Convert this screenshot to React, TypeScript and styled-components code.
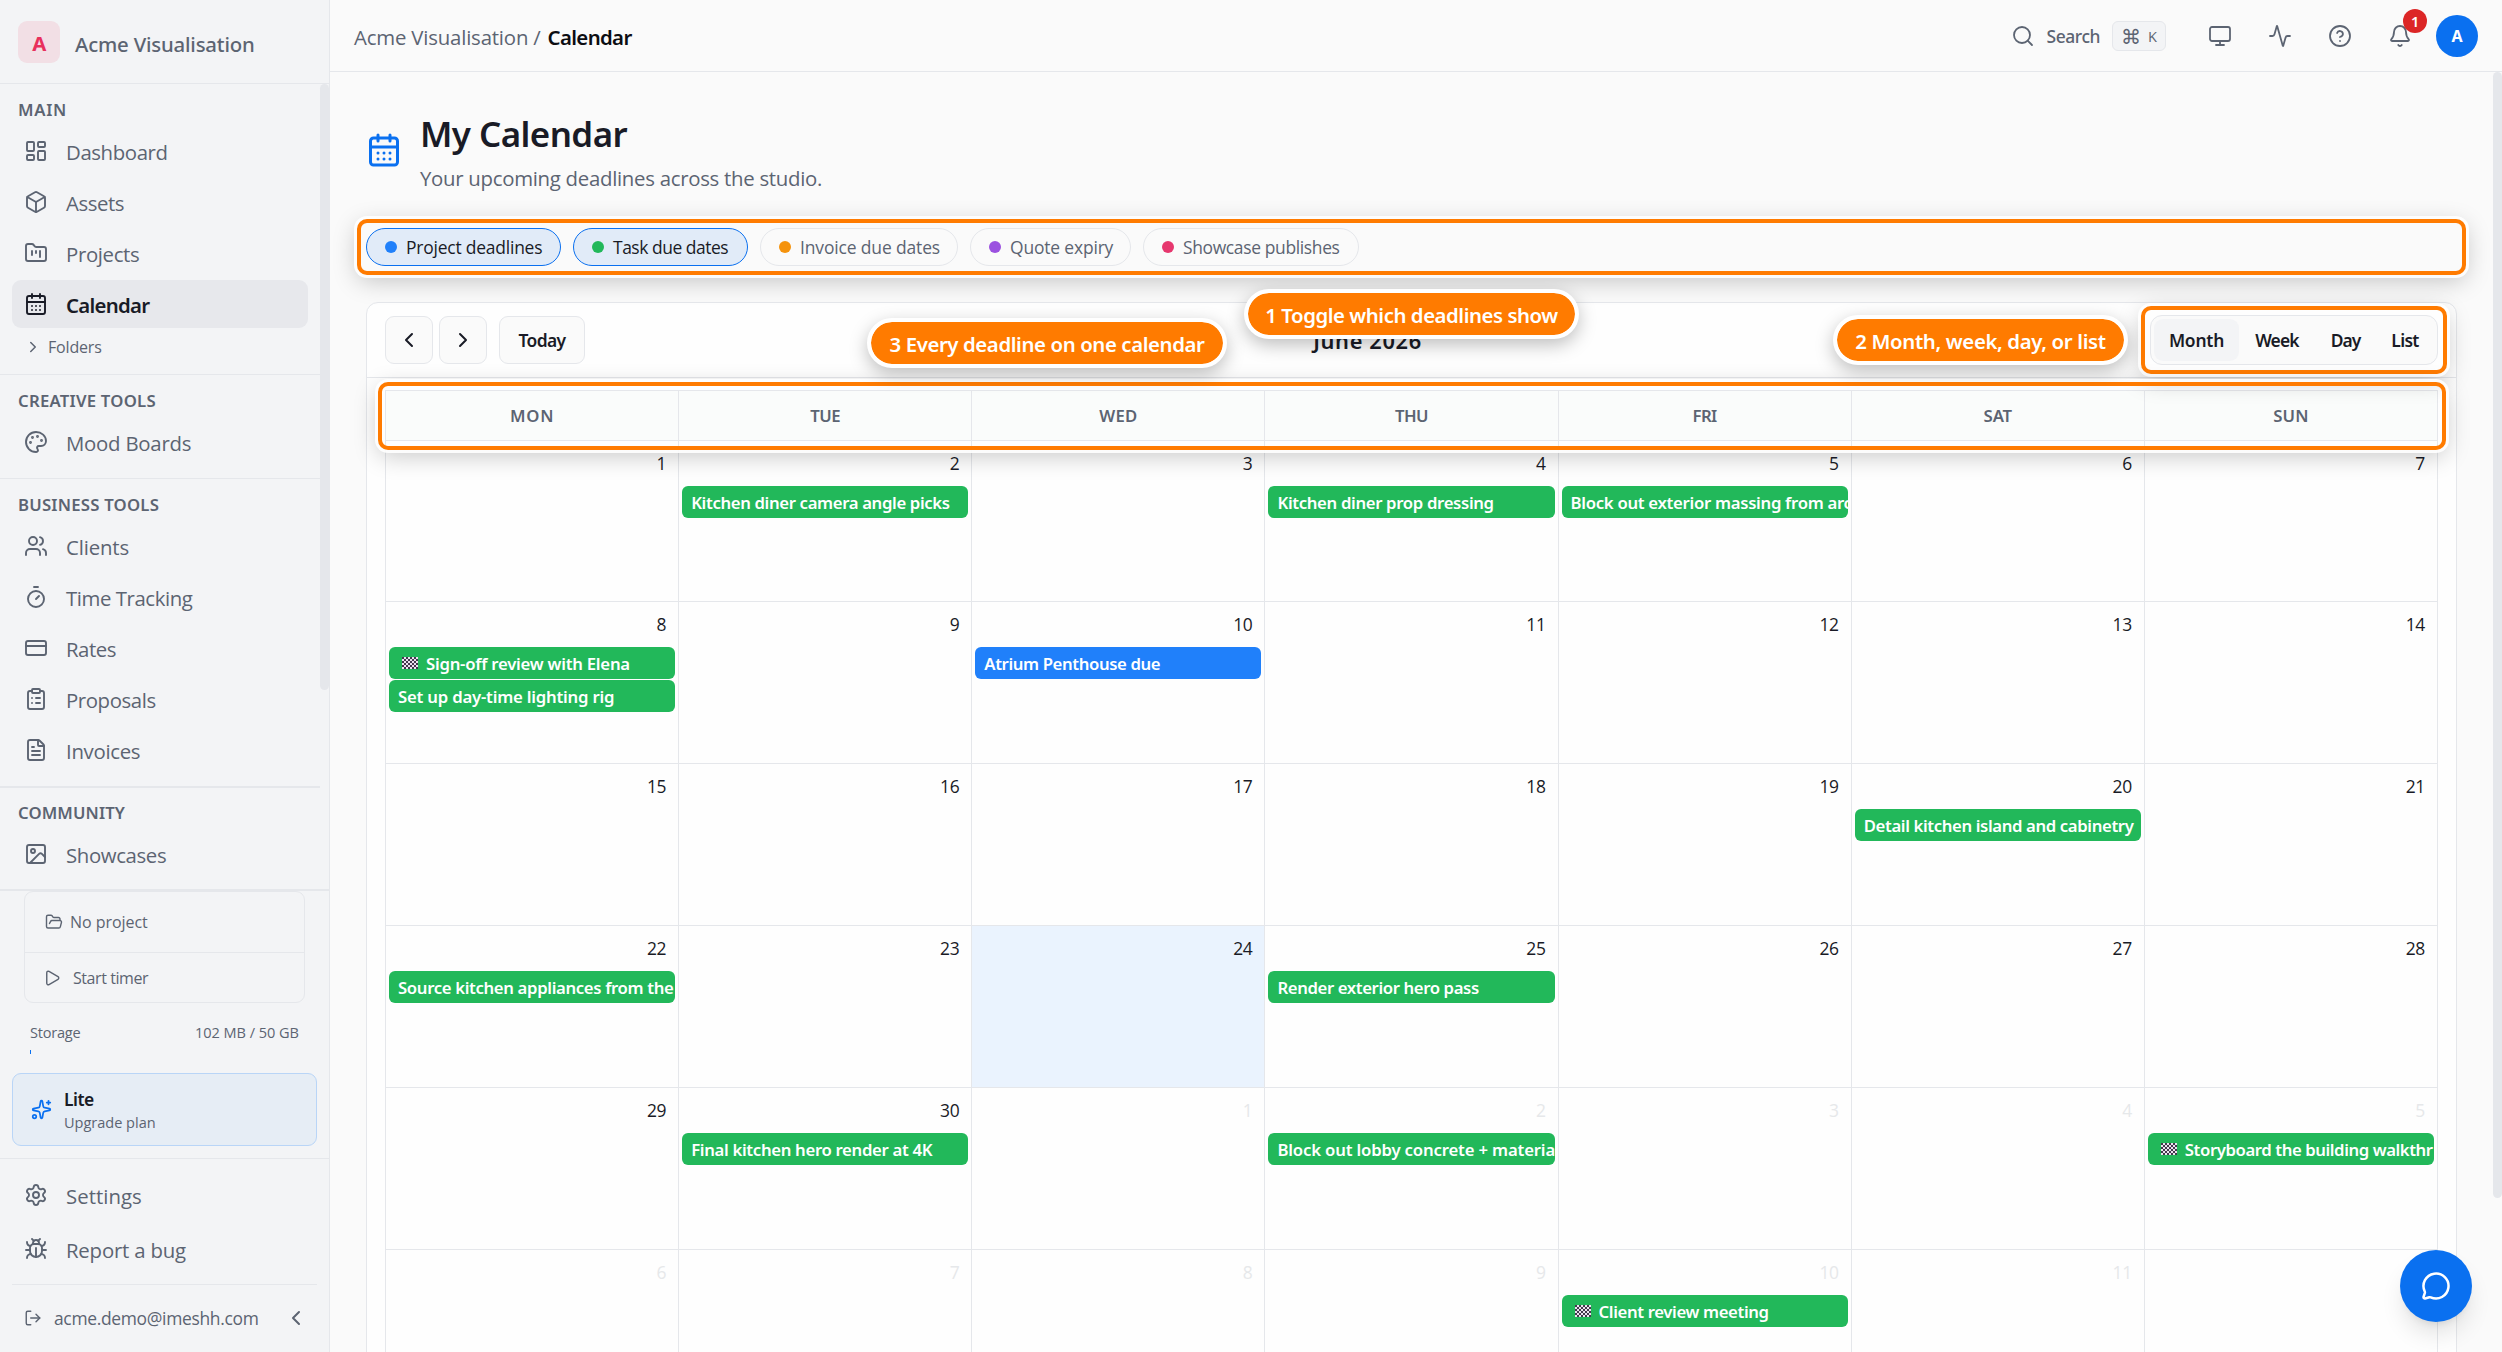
import React, { useLayoutEffect, useRef, useState } from "react";
import styled, { createGlobalStyle, css } from "styled-components";
import {
  Activity,
  Bell,
  Bug,
  CalendarDays,
  ChevronLeft,
  ChevronRight,
  CircleQuestionMark,
  ClipboardList,
  CreditCard,
  FileText,
  FolderKanban,
  FolderOpen,
  Image,
  LayoutDashboard,
  LogOut,
  LucideIcon,
  MessageCircle,
  Monitor,
  Box,
  Palette,
  Play,
  Search,
  Settings,
  Sparkles,
  Timer,
  Users,
} from "lucide-react";

const color = {
  page: "#fafafa",
  side: "#f3f4f6",
  line: "#e5e7eb",
  ink: "#191b26",
  muted: "#5c6472",
  faint: "#e6e8ea",
  blue: "#0a70f0",
  green: "#22b85a",
  event: "#2080fa",
  orange: "#ff7b00",
};

const GlobalStyle = createGlobalStyle`
  *, *::before, *::after { box-sizing: border-box; }
  body {
    margin: 0;
    overflow: hidden;
    background: ${color.page};
    color: ${color.ink};
    font-family: "Open Sans", "Noto Sans", sans-serif;
  }
`;

/* ---------- text ---------- */

const Label = styled.span<{ $size: number; $weight?: number; $color?: string }>`
  flex: none;
  display: block;
  padding-top: 0.1em;
  line-height: 1.2;
  white-space: pre;
  font-family: ${(p) => (p.$weight && p.$weight > 400 ? '"Noto Sans", "Open Sans"' : '"Open Sans", "Noto Sans"')}, sans-serif;
  font-size: ${(p) => p.$size * 0.97}px;
  font-weight: ${(p) => p.$weight ?? 400};
  letter-spacing: -0.02em;
  color: ${(p) => p.$color ?? "inherit"};
`;

type TextProps = { size: number; weight?: number; tint?: string; fit?: number; children: string };

/** Single line of text whose tracking is adjusted so that it spans `fit` pixels. */
function Text({ size, weight, tint, fit, children }: TextProps) {
  const ref = useRef<HTMLSpanElement>(null);
  const [tracking, setTracking] = useState<number | null>(null);
  useLayoutEffect(() => {
    const ctx = document.createElement("canvas").getContext("2d");
    if (!fit || !ref.current || !ctx || children.length < 2) return;
    const style = getComputedStyle(ref.current);
    ctx.font = `${style.fontWeight} ${style.fontSize} ${style.fontFamily}`;
    const m = ctx.measureText(children);
    const natural = m.actualBoundingBoxRight + m.actualBoundingBoxLeft;
    setTracking((fit - natural) / (children.length - 1));
  }, [fit, children]);
  return (
    <Label ref={ref} $size={size} $weight={weight} $color={tint} style={tracking === null ? undefined : { letterSpacing: tracking }}>
      {children}
    </Label>
  );
}

/* ---------- shell ---------- */

const Shell = styled.div`
  position: relative;
  display: grid;
  grid-template-columns: 330px 1fr;
  width: 2502px;
  height: 1352px;
  overflow: hidden;
`;

const Sidebar = styled.aside`
  display: flex;
  flex-direction: column;
  height: 1352px;
  border-right: 1px solid ${color.line};
  background: ${color.side};
  color: ${color.muted};
`;

const Brand = styled.div`
  flex: none;
  display: flex;
  align-items: center;
  gap: 15px;
  height: 84px;
  padding: 1px 0 0 18px;
  border-bottom: 1px solid ${color.line};
`;

const BrandName = styled.div`
  padding-top: 2px;
`;

const BrandTile = styled.div`
  display: grid;
  place-items: center;
  width: 42px;
  height: 42px;
  border-radius: 9px;
  background: #f2dfe5;
`;

const NavArea = styled.div`
  flex: none;
  display: grid;
  grid-template-columns: 320px 9px;
  height: 805px;
`;

const ScrollThumb = styled.div<{ $height: number }>`
  height: ${(p) => p.$height}px;
  border-radius: 5px;
  background: ${color.line};
`;

const Group = styled.section<{ $rule: number }>`
  padding: 0 12px 12px;
  border-bottom: ${(p) => p.$rule}px solid ${color.line};
`;

const GroupTitle = styled.div<{ $tight?: boolean }>`
  display: flex;
  align-items: center;
  height: ${(p) => (p.$tight ? 42 : 43)}px;
  padding: 7px 6px 0;
`;

const NavList = styled.div<{ $gap?: number }>`
  display: flex;
  flex-direction: column;
  gap: ${(p) => p.$gap ?? 3}px;
`;

const NavItem = styled.a<{ $active?: boolean }>`
  display: flex;
  align-items: center;
  gap: 18px;
  height: 48px;
  padding-left: 12px;
  border-radius: 9px;
  ${(p) =>
    p.$active &&
    css`
      background: #e7e8ec;
      color: ${color.ink};
    `}
`;

const Folders = styled.div`
  display: flex;
  align-items: center;
  gap: 6px;
  height: 31px;
  margin-top: 3px;
  padding-left: 12px;
`;

const Foot = styled.div`
  flex: 1;
  display: flex;
  flex-direction: column;
  border-top: 2px solid ${color.line};
`;

const TimerCard = styled.div`
  flex: none;
  width: 281px;
  height: 112px;
  margin-left: 24px;
  border: 1px solid ${color.line};
  border-radius: 9px;
`;

const ProjectRow = styled.div`
  display: flex;
  align-items: center;
  gap: 7px;
  height: 61px;
  padding-left: 20px;
  border-bottom: 1px solid ${color.line};
`;

const TimerRow = styled.div`
  display: flex;
  align-items: center;
  gap: 12px;
  height: 49px;
  padding-left: 18px;
`;

const StorageRow = styled.div`
  display: flex;
  justify-content: space-between;
  align-items: center;
  height: 24px;
  margin-top: 17px;
  padding: 0 30px;
`;

const StorageBar = styled.div`
  width: 1px;
  height: 4px;
  margin: 6px 0 19px 30px;
  background: ${color.blue};
`;

const PlanCard = styled.div`
  flex: none;
  display: flex;
  align-items: center;
  gap: 12px;
  height: 73px;
  margin: 0 12px;
  padding-left: 18px;
  border: 1px solid #b9d5f7;
  border-radius: 9px;
  background: #e6edf5;
`;

const PlanText = styled.div`
  display: flex;
  flex-direction: column;
  gap: 2px;
`;

const FootNav = styled.div`
  margin-top: 12px;
  padding: 12px 12px 11px;
  border-top: 1px solid ${color.line};
`;

const Account = styled.div`
  display: flex;
  align-items: center;
  gap: 12px;
  height: 67px;
  margin: 0 12px;
  padding: 0 9px 0 12px;
  border-top: 1px solid ${color.line};
`;

const Push = styled.div`
  margin-left: auto;
  display: flex;
`;

/* ---------- top bar ---------- */

const Main = styled.main`
  display: flex;
  flex-direction: column;
  height: 1352px;
  min-width: 0;
`;

const TopBar = styled.header`
  flex: none;
  display: flex;
  align-items: center;
  justify-content: space-between;
  height: 72px;
  padding: 0 24px;
  border-bottom: 1px solid ${color.line};
  color: ${color.muted};
`;

const Crumbs = styled.div`
  display: flex;
  gap: 7px;
  padding-top: 2px;
`;

const Tools = styled.div`
  display: flex;
  align-items: center;
`;

const SearchBox = styled.div`
  display: flex;
  align-items: center;
  gap: 12px;
  margin-right: 42px;
`;

const Keys = styled.kbd`
  display: flex;
  align-items: center;
  justify-content: center;
  gap: 7px;
  width: 54px;
  height: 30px;
  border: 1px solid ${color.line};
  border-radius: 6px;
  background: ${color.side};
`;

const ToolIcons = styled.div`
  display: flex;
  gap: 36px;
  margin-right: 24px;
`;

const BellWrap = styled.div`
  position: relative;
  display: flex;
`;

const Badge = styled.div`
  position: absolute;
  left: 15px;
  top: -15px;
  display: grid;
  place-items: center;
  width: 24px;
  height: 24px;
  border-radius: 50%;
  background: #dc2626;
`;

const Avatar = styled.div`
  display: grid;
  place-items: center;
  width: 42px;
  height: 42px;
  border-radius: 50%;
  background: ${color.blue};
`;

/* ---------- content ---------- */

const Scroller = styled.div`
  flex: 1;
  min-height: 0;
  display: grid;
  grid-template-columns: 1fr 9px;
`;

const Content = styled.div`
  display: flex;
  flex-direction: column;
  gap: 36px;
  padding: 36px 36px 0;
  min-width: 0;
`;

const PageHead = styled.div`
  display: flex;
  align-items: center;
  gap: 18px;
  height: 84px;
  color: ${color.blue};
`;

const HeadText = styled.div`
  display: flex;
  flex-direction: column;
  justify-content: space-between;
  height: 84px;
`;

const HeadLine = styled.div<{ $height: number }>`
  display: flex;
  align-items: center;
  height: ${(p) => p.$height}px;
`;

const Chips = styled.div`
  display: flex;
  gap: 12px;
`;

const Chip = styled.button<{ $on?: boolean; $width: number }>`
  display: flex;
  align-items: center;
  gap: 9px;
  width: ${(p) => p.$width}px;
  height: 38px;
  padding: 0 0 0 18px;
  border: 1px solid ${(p) => (p.$on ? color.blue : color.line)};
  border-radius: 19px;
  background: ${(p) => (p.$on ? "#e1ebf8" : "transparent")};
  color: ${(p) => (p.$on ? color.ink : color.muted)};
`;

const Dot = styled.i<{ $color: string }>`
  width: 12px;
  height: 12px;
  border-radius: 50%;
  background: ${(p) => p.$color};
`;

const Card = styled.section`
  height: 1100px;
  border: 1px solid ${color.line};
  border-radius: 12px;
  background: #fefefe;
`;

const Toolbar = styled.div`
  display: flex;
  align-items: center;
  justify-content: space-between;
  height: 75px;
  padding: 0 18px;
  border-bottom: 1px solid ${color.line};
`;

const ButtonRow = styled.div`
  display: flex;
  gap: 6px;
`;

const ToolButton = styled.button<{ $wide?: boolean }>`
  display: grid;
  place-items: center;
  width: ${(p) => (p.$wide ? 86 : 48)}px;
  height: 48px;
  margin-left: ${(p) => (p.$wide ? 6 : 0)}px;
  padding: 0;
  border: 1px solid ${color.line};
  border-radius: 9px;
  background: ${color.page};
  color: ${color.ink};
`;

const Switch = styled.div`
  display: grid;
  grid-template-columns: 85px 76px 61px 58px;
  width: 288px;
  height: 50px;
  padding: 3px;
  border: 1px solid ${color.line};
  border-radius: 12px;
  background: ${color.page};
`;

const SwitchItem = styled.button<{ $active?: boolean }>`
  display: grid;
  place-items: center;
  height: 42px;
  padding: 0;
  border: 0;
  border-radius: 9px;
  background: ${(p) => (p.$active ? color.side : "transparent")};
  color: ${color.ink};
`;

const Month = styled.div`
  display: grid;
  grid-template-columns: repeat(7, 1fr);
  grid-template-rows: 50px 161px repeat(5, 162px);
  margin: 12px 18px 0;
  border-left: 1px solid ${color.line};
  border-top: 1px solid ${color.line};
`;

const WeekdayCell = styled.div`
  display: grid;
  place-items: center;
  border-right: 1px solid ${color.line};
  border-bottom: 1px solid ${color.line};
  background: #fafcfb;
`;

const DayCell = styled.div<{ $today?: boolean }>`
  min-width: 0;
  padding: 0 3px;
  border-right: 1px solid ${color.line};
  border-bottom: 1px solid ${color.line};
  background: ${(p) => (p.$today ? "#eaf3fe" : "transparent")};
`;

const DayNumber = styled.div`
  display: flex;
  justify-content: flex-end;
  align-items: center;
  height: 45px;
  padding: 0 9px 1px 0;
`;

const Event = styled.div<{ $color: string }>`
  display: flex;
  align-items: center;
  height: 31.5px;
  margin-bottom: 1.5px;
  padding-left: 9px;
  overflow: hidden;
  border-radius: 6px;
  background: ${(p) => p.$color};
  color: #fff;
`;

const Flag = styled.svg`
  flex: none;
  width: 16px;
  height: 12px;
  margin: 0 8px 0 4px;
`;

/* ---------- overlays ---------- */

const Frame = styled.div<{ $x: number; $y: number; $w: number; $h: number }>`
  position: absolute;
  left: ${(p) => p.$x}px;
  top: ${(p) => p.$y}px;
  width: ${(p) => p.$w}px;
  height: ${(p) => p.$h}px;
  border: 4px solid ${color.orange};
  border-radius: 10px;
  box-shadow: 0 0 0 3px rgba(255, 255, 255, 0.9), 0 6px 24px rgba(0, 0, 0, 0.22);
`;

const Callout = styled.div<{ $x: number; $y: number; $w: number }>`
  position: absolute;
  left: ${(p) => p.$x}px;
  top: ${(p) => p.$y}px;
  display: grid;
  place-items: center;
  width: ${(p) => p.$w}px;
  height: 50px;
  border: 4px solid #fff;
  border-radius: 25px;
  background: ${color.orange};
  background-clip: padding-box;
  color: #fff;
  box-shadow: 0 6px 18px rgba(0, 0, 0, 0.25);
`;

const ChatButton = styled.button`
  position: absolute;
  left: 2400px;
  top: 1250px;
  display: grid;
  place-items: center;
  width: 72px;
  height: 72px;
  padding: 0;
  border: 0;
  border-radius: 50%;
  background: ${color.blue};
  color: #fff;
  box-shadow: 0 15px 24px -4px rgba(0, 0, 0, 0.12), 0 6px 9px -6px rgba(0, 0, 0, 0.12);
`;

/* ---------- data ---------- */

type Item = { icon: LucideIcon; text: string; fit: number; active?: boolean };
type NavGroup = { title: string; fit: number; rule: number; items: Item[]; tight?: boolean; folders?: boolean };

const groups: NavGroup[] = [
  {
    title: "MAIN", fit: 46, rule: 1, folders: true,
    items: [
      { icon: LayoutDashboard, text: "Dashboard", fit: 99.5 },
      { icon: Box, text: "Assets", fit: 57.7 },
      { icon: FolderKanban, text: "Projects", fit: 72 },
      { icon: CalendarDays, text: "Calendar", fit: 83.3, active: true },
    ],
  },
  { title: "CREATIVE TOOLS", fit: 137.4, rule: 1, items: [{ icon: Palette, text: "Mood Boards", fit: 123.7 }] },
  {
    title: "BUSINESS TOOLS", fit: 139.7, rule: 2,
    items: [
      { icon: Users, text: "Clients", fit: 61.5 },
      { icon: Timer, text: "Time Tracking", fit: 126.7 },
      { icon: CreditCard, text: "Rates", fit: 48.8 },
      { icon: ClipboardList, text: "Proposals", fit: 88.4 },
      { icon: FileText, text: "Invoices", fit: 72.8 },
    ],
  },
  { title: "COMMUNITY", fit: 107.8, rule: 0, tight: true, items: [{ icon: Image, text: "Showcases", fit: 98.9 }] },
];

const chips = [
  { text: "Project deadlines", fit: 135.2, dot: "#2080fa", width: 195, on: true },
  { text: "Task due dates", fit: 115.3, dot: "#22b85a", width: 175, on: true },
  { text: "Invoice due dates", fit: 138.8, dot: "#f5930d", width: 198 },
  { text: "Quote expiry", fit: 102.6, dot: "#9b51e0", width: 161 },
  { text: "Showcase publishes", fit: 156.6, dot: "#e6376e", width: 216 },
];

const weekdays: [string, number][] = [
  ["MON", 41.3], ["TUE", 30], ["WED", 37.6], ["THU", 33], ["FRI", 23.5], ["SAT", 29], ["SUN", 34],
];

type Entry = { text: string; fit: number; flag?: boolean; blue?: boolean };

const entries: Record<number, Entry[]> = {
  1: [{ text: "Kitchen diner camera angle picks", fit: 257.7 }],
  3: [{ text: "Kitchen diner prop dressing", fit: 215.2 }],
  4: [{ text: "Block out exterior massing from arc", fit: 280 }],
  7: [
    { text: "Sign-off review with Elena", fit: 203.3, flag: true },
    { text: "Set up day-time lighting rig", fit: 216 },
  ],
  9: [{ text: "Atrium Penthouse due", fit: 175.5, blue: true }],
  19: [{ text: "Detail kitchen island and cabinetry", fit: 270 }],
  21: [{ text: "Source kitchen appliances from the", fit: 275 }],
  24: [{ text: "Render exterior hero pass", fit: 200.5 }],
  29: [{ text: "Final kitchen hero render at 4K", fit: 240.5 }],
  31: [{ text: "Block out lobby concrete + materia", fit: 276 }],
  34: [{ text: "Storyboard the building walkthr", fit: 249, flag: true }],
  39: [{ text: "Client review meeting", fit: 170, flag: true }],
};

const views: [string, number][] = [["Month", 53.3], ["Week", 45.2], ["Day", 30], ["List", 26.9]];

function CheckeredFlag() {
  return (
    <Flag viewBox="0 0 16 12" shapeRendering="crispEdges">
      <rect width="16" height="12" fill="#ece3f0" />
      {Array.from({ length: 24 }, (_, i) => {
        const row = Math.floor(i / 4);
        return <rect key={i} x={(i % 4) * 4 + (row % 2) * 2} y={row * 2} width="2" height="2" fill="#42384c" />;
      })}
    </Flag>
  );
}

export default function App() {
  return (
    <Shell>
      <GlobalStyle />
      <Sidebar>
        <Brand>
          <BrandTile>
            <Text size={21} weight={700} tint="#e8305c">A</Text>
          </BrandTile>
          <BrandName>
            <Text size={21} weight={500} fit={179}>Acme Visualisation</Text>
          </BrandName>
        </Brand>
        <NavArea>
          <div>
            {groups.map((g) => (
              <Group key={g.title} $rule={g.rule}>
                <GroupTitle $tight={g.tight}>
                  <Text size={17.25} weight={600} fit={g.fit}>{g.title}</Text>
                </GroupTitle>
                <NavList>
                  {g.items.map(({ icon: Icon, text, fit, active }) => (
                    <NavItem key={text} $active={active}>
                      <Icon size={24} strokeWidth={1.9} />
                      <Text size={21} weight={active ? 600 : 400} fit={fit}>{text}</Text>
                    </NavItem>
                  ))}
                </NavList>
                {g.folders && (
                  <Folders>
                    <ChevronRight size={18} strokeWidth={2} />
                    <Text size={16.5} fit={52.2}>Folders</Text>
                  </Folders>
                )}
              </Group>
            ))}
          </div>
          <ScrollThumb $height={606} />
        </NavArea>
        <Foot>
          <TimerCard>
            <ProjectRow>
              <FolderOpen size={18} strokeWidth={1.9} />
              <Text size={16.5} fit={77}>No project</Text>
            </ProjectRow>
            <TimerRow>
              <Play size={18} strokeWidth={1.9} />
              <Text size={16.5} fit={76}>Start timer</Text>
            </TimerRow>
          </TimerCard>
          <StorageRow>
            <Text size={15} fit={50.4}>Storage</Text>
            <Text size={15} fit={102.7}>102 MB / 50 GB</Text>
          </StorageRow>
          <StorageBar />
          <PlanCard>
            <Sparkles size={21} strokeWidth={2} color={color.blue} />
            <PlanText>
              <Text size={18} weight={600} tint={color.ink} fit={29}>Lite</Text>
              <Text size={15} fit={89.7}>Upgrade plan</Text>
            </PlanText>
          </PlanCard>
          <FootNav>
            <NavList $gap={6}>
              <NavItem>
                <Settings size={24} strokeWidth={1.9} />
                <Text size={21} fit={74}>Settings</Text>
              </NavItem>
              <NavItem>
                <Bug size={24} strokeWidth={1.9} />
                <Text size={21} fit={119}>Report a bug</Text>
              </NavItem>
            </NavList>
          </FootNav>
          <Account>
            <LogOut size={18} strokeWidth={1.9} />
            <Text size={18} fit={203.7}>acme.demo@imeshh.com</Text>
            <Push>
              <ChevronLeft size={24} strokeWidth={2} />
            </Push>
          </Account>
        </Foot>
      </Sidebar>

      <Main>
        <TopBar>
          <Crumbs>
            <Text size={21} fit={187.3}>Acme Visualisation /</Text>
            <Text size={21} weight={600} tint="#0c0d12" fit={83.8}>Calendar</Text>
          </Crumbs>
          <Tools>
            <SearchBox>
              <Search size={24} strokeWidth={1.8} />
              <Text size={18} weight={500} fit={52.9}>Search</Text>
              <Keys>
                <Text size={21}>⌘</Text>
                <Text size={15}>K</Text>
              </Keys>
            </SearchBox>
            <ToolIcons>
              <Monitor size={24} strokeWidth={1.8} />
              <Activity size={24} strokeWidth={1.8} />
              <CircleQuestionMark size={24} strokeWidth={1.8} />
              <BellWrap>
                <Bell size={24} strokeWidth={1.8} />
                <Badge>
                  <Text size={15} weight={600} tint="#fff">1</Text>
                </Badge>
              </BellWrap>
            </ToolIcons>
            <Avatar>
              <Text size={16.5} weight={700} tint="#fff">A</Text>
            </Avatar>
          </Tools>
        </TopBar>

        <Scroller>
          <Content>
            <PageHead>
              <CalendarDays size={36} strokeWidth={2} />
              <HeadText>
                <HeadLine $height={48}>
                  <Text size={36} weight={600} tint={color.ink} fit={204.5}>My Calendar</Text>
                </HeadLine>
                <HeadLine $height={30}>
                  <Text size={21} tint={color.muted} fit={401}>Your upcoming deadlines across the studio.</Text>
                </HeadLine>
              </HeadText>
            </PageHead>

            <Chips>
              {chips.map((c) => (
                <Chip key={c.text} $on={c.on} $width={c.width}>
                  <Dot $color={c.dot} />
                  <Text size={18} fit={c.fit}>{c.text}</Text>
                </Chip>
              ))}
            </Chips>

            <Card>
              <Toolbar>
                <ButtonRow>
                  <ToolButton><ChevronLeft size={24} /></ToolButton>
                  <ToolButton><ChevronRight size={24} /></ToolButton>
                  <ToolButton $wide><Text size={18} weight={600} fit={48}>Today</Text></ToolButton>
                </ButtonRow>
                <Text size={22.5} weight={600} fit={109.5}>June 2026</Text>
                <Switch>
                  {views.map(([v, fit], i) => (
                    <SwitchItem key={v} $active={i === 0}>
                      <Text size={18} weight={600} fit={fit}>{v}</Text>
                    </SwitchItem>
                  ))}
                </Switch>
              </Toolbar>
              <Month>
                {weekdays.map(([d, fit]) => (
                  <WeekdayCell key={d}>
                    <Text size={17.25} weight={600} tint={color.muted} fit={fit}>{d}</Text>
                  </WeekdayCell>
                ))}
                {Array.from({ length: 42 }, (_, i) => (
                  <DayCell key={i} $today={i === 23}>
                    <DayNumber>
                      <Text size={18} tint={i < 30 ? color.ink : color.faint}>{String(i < 30 ? i + 1 : i - 29)}</Text>
                    </DayNumber>
                    {(entries[i] ?? []).map((e) => (
                      <Event key={e.text} $color={e.blue ? color.event : color.green}>
                        {e.flag && <CheckeredFlag />}
                        <Text size={17.25} weight={600} fit={e.fit}>{e.text}</Text>
                      </Event>
                    ))}
                  </DayCell>
                ))}
              </Month>
            </Card>
          </Content>
          <ScrollThumb $height={1126} />
        </Scroller>
      </Main>

      <Frame $x={357} $y={219} $w={2109} $h={56} />
      <Frame $x={2141} $y={306} $w={306} $h={68} />
      <Frame $x={378} $y={382} $w={2068} $h={68} />
      <Callout $x={1244} $y={289} $w={335}>
        <Text size={21} weight={600} fit={292}>1 Toggle which deadlines show</Text>
      </Callout>
      <Callout $x={1833} $y={315} $w={295}>
        <Text size={21} weight={600} fit={250.5}>2 Month, week, day, or list</Text>
      </Callout>
      <Callout $x={867} $y={318} $w={360}>
        <Text size={21} weight={600} fit={315.5}>3 Every deadline on one calendar</Text>
      </Callout>
      <ChatButton>
        <MessageCircle size={30} strokeWidth={2} />
      </ChatButton>
    </Shell>
  );
}
